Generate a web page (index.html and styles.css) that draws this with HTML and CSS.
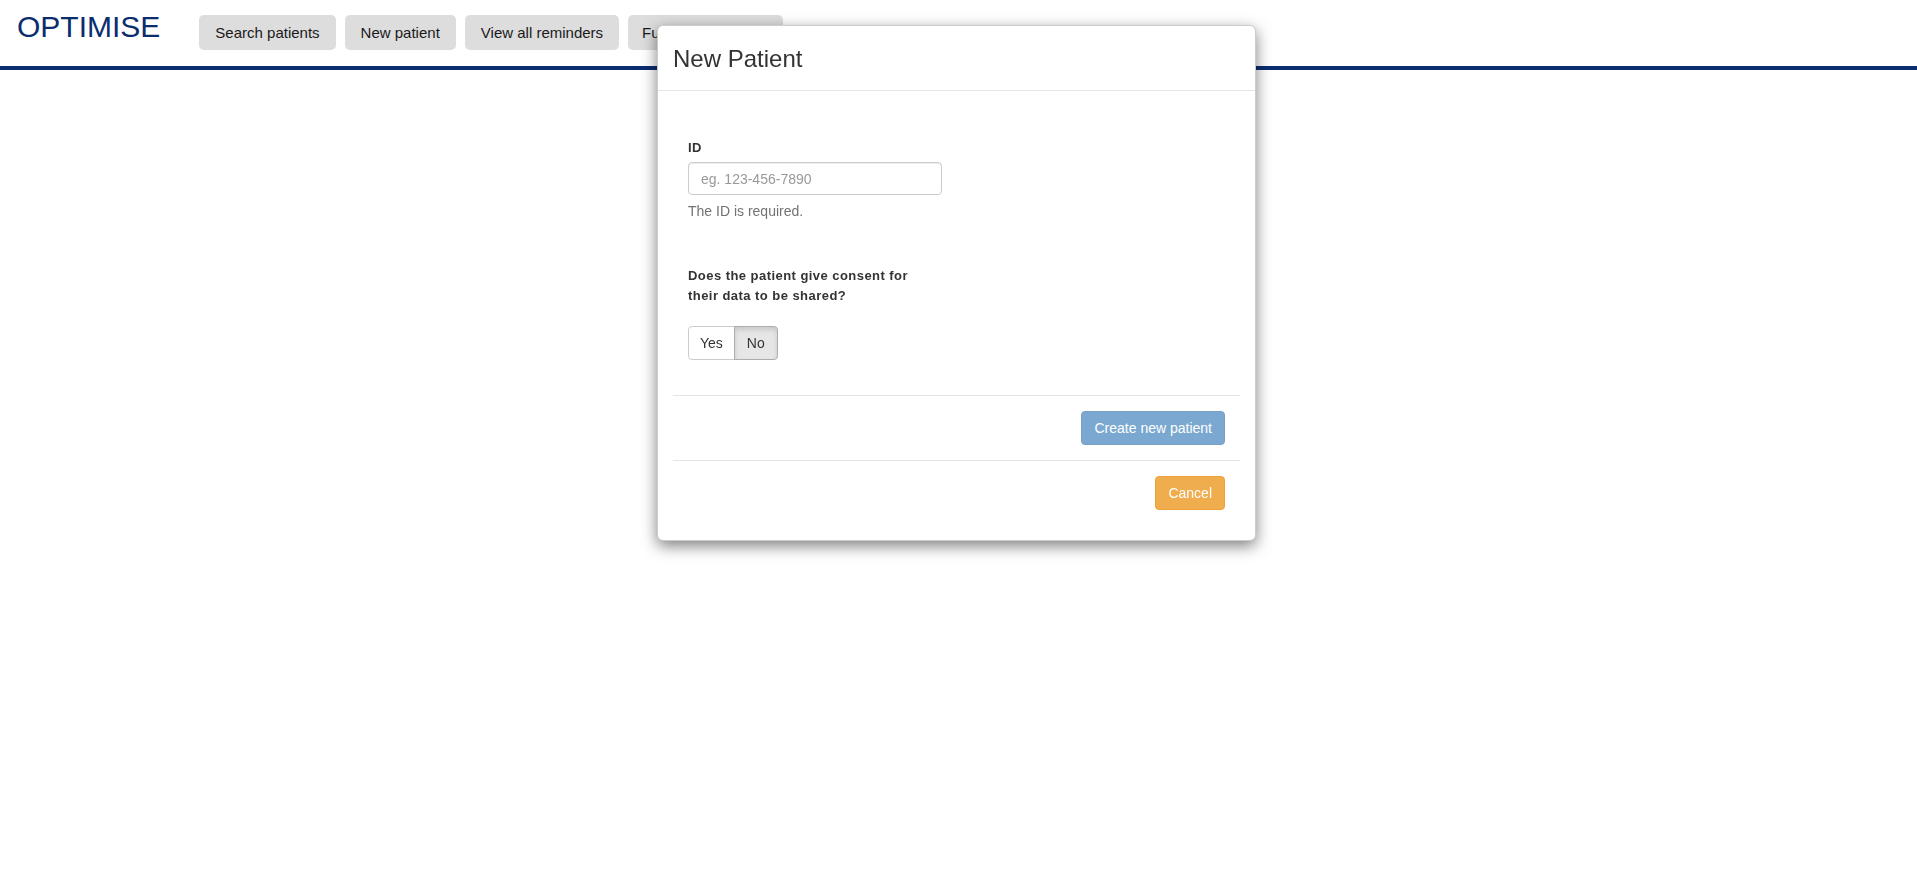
FILE: index.html
```html
<!DOCTYPE html>
<html lang="en">
<head>
<meta charset="utf-8">
<title>OPTIMISE</title>
<link rel="stylesheet" href="styles.css">
</head>
<body>
<header class="topbar">
  <div class="brand">OPTIMISE</div>
  <nav class="nav">
    <button class="nav-btn" type="button">Search patients</button>
    <button class="nav-btn" type="button">New patient</button>
    <button class="nav-btn" type="button">View all reminders</button>
    <button class="nav-btn nav-btn-last" type="button">Further information</button>
  </nav>
</header>

<div class="overlay">
  <div class="modal">
    <div class="modal-header">
      <h4 class="modal-title">New Patient</h4>
    </div>
    <div class="modal-body">
      <div class="form-area">
        <div class="field">
          <label class="label" for="pid">ID</label>
          <input class="input" id="pid" type="text" placeholder="eg. 123-456-7890">
          <div class="help">The ID is required.</div>
        </div>
        <div class="field consent">
          <div class="label question">Does the patient give consent for their data to be shared?</div>
          <div class="toggle">
            <button class="tbtn" type="button">Yes</button>
            <button class="tbtn active" type="button">No</button>
          </div>
        </div>
      </div>
      <div class="action-row">
        <button class="btn btn-primary" type="button" disabled>Create new patient</button>
      </div>
      <div class="action-row">
        <button class="btn btn-warning" type="button">Cancel</button>
      </div>
    </div>
  </div>
</div>
</body>
</html>
```

FILE: styles.css
```css
html, body {
  margin: 0;
  padding: 0;
  background: #ffffff;
  font-family: "Liberation Sans", Arial, sans-serif;
  color: #333333;
}

.topbar {
  display: flex;
  align-items: flex-start;
  height: 66px;
  padding-left: 17px;
  border-bottom: 4px solid #0b2d6e;
}

.brand {
  margin-top: 12px;
  font-size: 30px;
  line-height: 30px;
  color: #0b2d6e;
}

.nav {
  display: flex;
  gap: 9px;
  margin-left: 39px;
  margin-top: 15px;
}

.nav-btn {
  font-family: "Liberation Sans", Arial, sans-serif;
  font-size: 15px;
  line-height: 19px;
  padding: 8px 16px;
  border: none;
  border-radius: 5px;
  background: #dddddd;
  color: #1a1a1a;
}

.nav-btn-last {
  padding: 8px 14px;
}

.overlay {
  position: fixed;
  top: 0;
  left: 0;
  right: 0;
  bottom: 0;
}

.modal {
  position: absolute;
  top: 25px;
  left: 657px;
  width: 597px;
  background: #ffffff;
  border: 1px solid rgba(0, 0, 0, 0.2);
  border-radius: 6px;
  box-shadow: 0 5px 15px rgba(0, 0, 0, 0.5);
}

.modal-header {
  padding: 16px 15px 15px 15px;
  border-bottom: 1px solid #e5e5e5;
}

.modal-title {
  margin: 0;
  font-size: 24px;
  line-height: 33px;
  font-weight: normal;
  color: #333333;
}

.modal-body {
  padding: 0 15px 15px 15px;
}

.form-area {
  padding: 48px 15px 35px 15px;
}

.field {
  display: flex;
  flex-direction: column;
  align-items: flex-start;
}

.label {
  display: block;
  font-size: 13px;
  line-height: 18px;
  font-weight: bold;
  letter-spacing: 0.45px;
  color: #333333;
  margin-bottom: 5px;
}

.input {
  box-sizing: border-box;
  width: 254px;
  height: 33px;
  padding: 6px 12px;
  font-family: "Liberation Sans", Arial, sans-serif;
  font-size: 14px;
  color: #555555;
  border: 1px solid #cccccc;
  border-radius: 4px;
  box-shadow: inset 0 1px 1px rgba(0, 0, 0, 0.075);
}

.input::placeholder {
  color: #999999;
}

.help {
  margin-top: 6px;
  font-size: 14px;
  line-height: 20px;
  color: #737373;
}

.consent {
  margin-top: 45px;
}

.question {
  max-width: 240px;
  line-height: 20px;
  margin-bottom: 20px;
}

.toggle {
  display: flex;
}

.tbtn {
  font-family: "Liberation Sans", Arial, sans-serif;
  font-size: 14px;
  line-height: 20px;
  padding: 6px 11px;
  background: #ffffff;
  color: #333333;
  border: 1px solid #cccccc;
  border-radius: 4px 0 0 4px;
}

.tbtn.active {
  margin-left: -1px;
  padding: 6px 12px;
  background: #e6e6e6;
  border-color: #adadad;
  border-radius: 0 4px 4px 0;
  box-shadow: inset 0 3px 5px rgba(0, 0, 0, 0.125);
}

.action-row {
  display: flex;
  justify-content: flex-end;
  padding: 15px;
  border-top: 1px solid #e5e5e5;
}

.btn {
  font-family: "Liberation Sans", Arial, sans-serif;
  font-size: 14px;
  line-height: 20px;
  padding: 6px 12px;
  border: 1px solid transparent;
  border-radius: 4px;
  color: #ffffff;
}

.btn-primary {
  background: #337ab7;
  border-color: #2e6da4;
  opacity: 0.65;
}

.btn-warning {
  background: #f0ad4e;
  border-color: #eea236;
}
```
